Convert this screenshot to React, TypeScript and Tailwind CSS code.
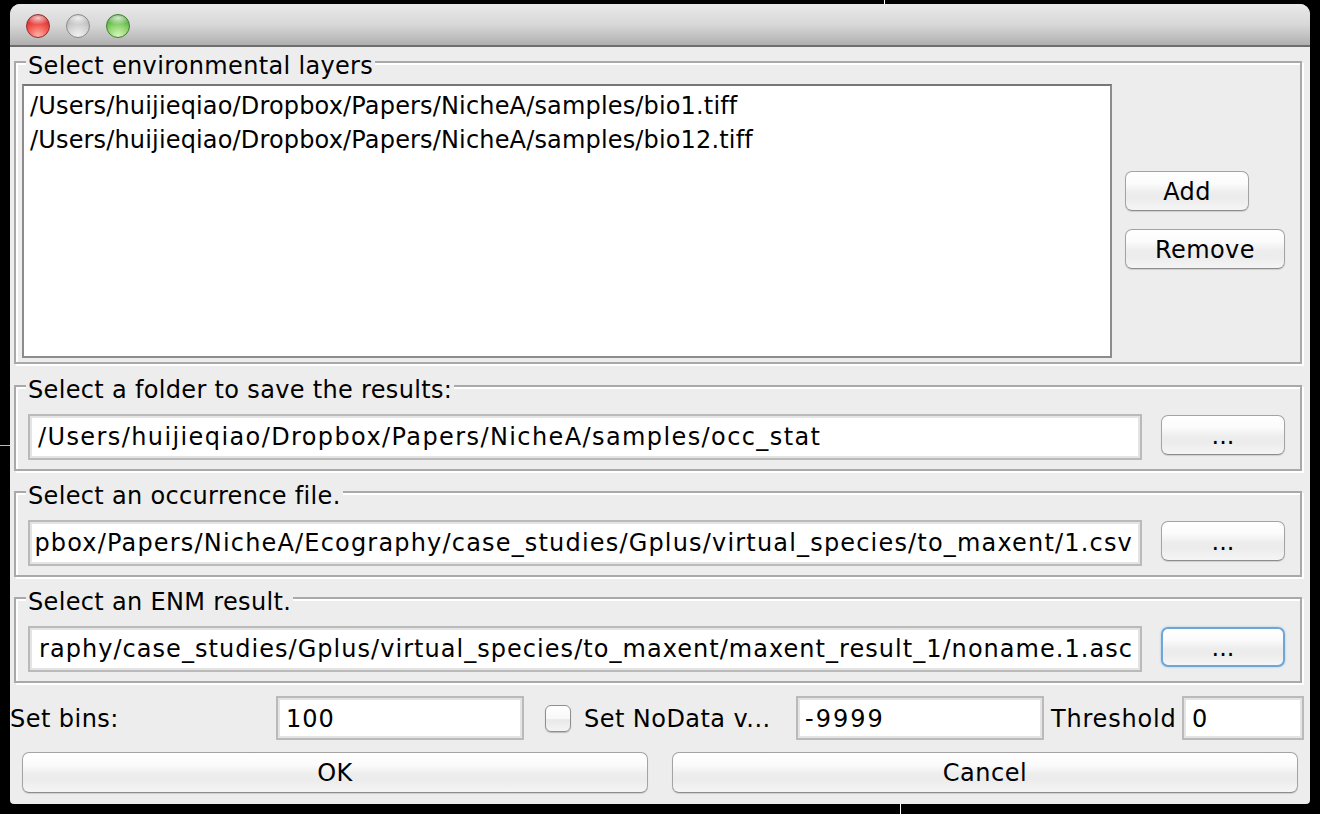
const font = "font-['DejaVu_Sans','Liberation_Sans',sans-serif]";

function AquaButton({ label, className, focused }: { label: string; className: string; focused?: boolean }) {
  return (
    <button
      className={`flex items-center justify-center rounded-[7px] border pt-[1px] text-black bg-[linear-gradient(to_bottom,#ffffff_0%,#fbfbfb_30%,#ededed_55%,#ececec_70%,#f5f5f5_100%)] ${
        focused
          ? "border-2 border-[#6ea6d8] shadow-[0_0_2px_#8fbce6]"
          : "border-[#a3a3a3] border-b-[#8c8c8c] shadow-[0_1px_1px_#cfcfcf]"
      } ${className}`}
    >
      {label}
    </button>
  );
}

function Field({ value, className, end, pad }: { value: string; className: string; end?: boolean; pad?: string }) {
  return (
    <div
      className={`flex items-center whitespace-nowrap bg-white border-2 border-[#bababa] shadow-[inset_0_0_0_2px_#e4e4e4] ${end ? "justify-end" : "justify-start"} ${pad ?? ""} ${className}`}
    >
      <span className="shrink-0">{value}</span>
    </div>
  );
}

function Group({ title, className, children }: { title: string; className: string; children: React.ReactNode }) {
  return (
    <div className={`relative w-[1288px] border-2 border-[#a9a9a9] shadow-[inset_2px_2px_0_#fff,2px_2px_0_#fff] ${className}`}>
      <span className="absolute left-[10px] top-[-13px] h-[26px] bg-[#ededed] px-[2px] text-[24px] leading-[32px] tracking-[0.33px] whitespace-nowrap">
        {title}
      </span>
      {children}
    </div>
  );
}

function PathGroup({ title, value, end, focused, className, tracking, pad }: { title: string; value: string; end?: boolean; focused?: boolean; className?: string; tracking: string; pad: string }) {
  return (
    <Group title={title} className={`h-[86px] flex items-start pl-[12px] pt-[27px] ${className ?? ""}`}>
      <Field value={value} end={end} className={`w-[1114px] h-[46px] text-[24px] ${tracking}`} pad={pad} />
      <AquaButton label="..." focused={focused} className="ml-[19px] mt-[1px] w-[124px] h-[40px] text-[24px]" />
    </Group>
  );
}

function Light({ gradient }: { gradient: string }) {
  return <div className={`h-[24px] w-[24px] rounded-full border ${gradient}`} />;
}

export default function App() {
  return (
    <div className={`relative h-[814px] w-[1320px] overflow-hidden bg-black pl-[10px] pt-[4px] ${font}`}>
      <div className="absolute left-[884px] top-0 h-[4px] w-[1px] bg-white" />
      <div className="absolute left-[900px] top-[804px] h-[10px] w-[1px] bg-white" />
      <div className="absolute left-0 top-[445px] h-[1px] w-[10px] bg-[#bbb]" />
      <div className="h-[800px] w-[1300px] overflow-hidden rounded-b-[4px] rounded-t-[10px] bg-[#ededed] text-black">
        <div className="flex h-[43px] items-center gap-[16px] border-b-2 border-[#6e6e6e] bg-[linear-gradient(to_bottom,#e9e9e9,#d8d8d8_50%,#b0b0b0)] pt-[3px] pl-[16px]">
          <Light gradient="border-[#8f2c2c] bg-[radial-gradient(ellipse_60%_30%_at_50%_14%,rgba(255,255,255,0.75),rgba(255,255,255,0)_100%),radial-gradient(circle_at_50%_95%,#ffb3a8_0%,#f25a52_45%,#d92f2f_75%,#b52424_100%)]" />
          <Light gradient="border-[#8a8a8a] bg-[radial-gradient(ellipse_60%_30%_at_50%_14%,rgba(255,255,255,0.8),rgba(255,255,255,0)_100%),radial-gradient(circle_at_50%_95%,#f2f2f2_0%,#cfcfcf_50%,#b0b0b0_85%,#9a9a9a_100%)]" />
          <Light gradient="border-[#3f7d30] bg-[radial-gradient(ellipse_60%_30%_at_50%_14%,rgba(255,255,255,0.75),rgba(255,255,255,0)_100%),radial-gradient(circle_at_50%_95%,#d8f5bd_0%,#8fd46e_45%,#5aae45_75%,#3f8f30_100%)]" />
        </div>
        <div className="flex flex-col pl-[4px] pt-[14px]">
          <Group title="Select environmental layers" className="h-[303px] flex items-start pl-[6px] pt-[21px]">
            <div className="flex h-[274px] w-[1090px] flex-col border-2 border-[#8c8c8c] border-t-[#767676] bg-white pl-[6px] pt-[3px] text-[24px] leading-[34px] tracking-[0.16px]">
              <div>/Users/huijieqiao/Dropbox/Papers/NicheA/samples/bio1.tiff</div>
              <div>/Users/huijieqiao/Dropbox/Papers/NicheA/samples/bio12.tiff</div>
            </div>
            <div className="ml-[13px] flex flex-col items-start gap-[18px] pt-[87px] text-[24px] tracking-[0.4px]">
              <AquaButton label="Add" className="h-[40px] w-[124px]" />
              <AquaButton label="Remove" className="h-[40px] w-[160px]" />
            </div>
          </Group>
          <PathGroup
            className="mt-[21px]"
            tracking="tracking-[1.4px]"
            pad="pl-[8px]"
            title="Select a folder to save the results:"
            value="/Users/huijieqiao/Dropbox/Papers/NicheA/samples/occ_stat"
          />
          <PathGroup
            className="mt-[20px]"
            tracking="tracking-[1.18px]"
            pad="pr-[7px]"
            title="Select an occurrence file."
            end
            value="pbox/Papers/NicheA/Ecography/case_studies/Gplus/virtual_species/to_maxent/1.csv"
          />
          <PathGroup
            className="mt-[20px]"
            tracking="tracking-[1.04px]"
            pad="pr-[7px]"
            title="Select an ENM result."
            end
            focused
            value="raphy/case_studies/Gplus/virtual_species/to_maxent/maxent_result_1/noname.1.asc"
          />
        </div>
        <div className="mt-[13px] flex h-[44px] items-center text-[24px]">
          <span className="w-[266px] pt-[1px] tracking-[0.45px]">Set bins:</span>
          <Field value="100" className="h-[44px] w-[248px] pt-[1px] tracking-[1px]" pad="pl-[8px]" />
          <div className="ml-[21px] h-[27px] w-[26px] rounded-[6px] border border-[#8e8e8e] bg-[linear-gradient(to_bottom,#ffffff,#f8f8f8_50%,#e8e8e8_55%,#f4f4f4)] shadow-[0_1px_1px_#bbb]" />
          <span className="ml-[13px] w-[212px] whitespace-nowrap pt-[1px] tracking-[0.45px]">Set NoData v...</span>
          <Field value="-9999" className="h-[44px] w-[248px] pt-[1px] tracking-[2px]" pad="pl-[7px]" />
          <span className="ml-[7px] w-[131px] whitespace-nowrap pt-[1px] tracking-[0.8px]">Threshold</span>
          <Field value="0" className="h-[44px] w-[122px] pt-[1px]" pad="pl-[8px]" />
        </div>
        <div className="mt-[12px] flex gap-[24px] pl-[12px] text-[24px] tracking-[0.5px]">
          <AquaButton label="OK" className="h-[41px] w-[626px]" />
          <AquaButton label="Cancel" className="h-[41px] w-[626px]" />
        </div>
      </div>
    </div>
  );
}
